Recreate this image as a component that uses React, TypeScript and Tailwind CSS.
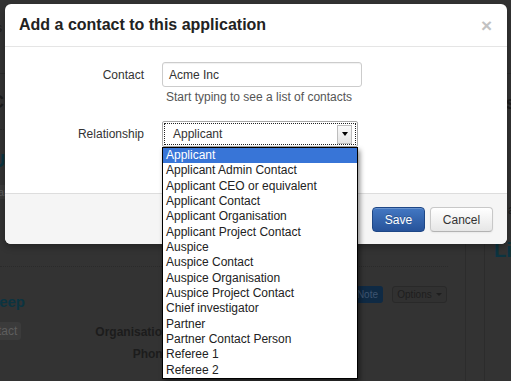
import React from "react";

const RELATIONSHIPS = [
  "Applicant",
  "Applicant Admin Contact",
  "Applicant CEO or equivalent",
  "Applicant Contact",
  "Applicant Organisation",
  "Applicant Project Contact",
  "Auspice",
  "Auspice Contact",
  "Auspice Organisation",
  "Auspice Project Contact",
  "Chief investigator",
  "Partner",
  "Partner Contact Person",
  "Referee 1",
  "Referee 2",
];

// the page behind the backdrop, dimmed almost to nothing
function PageBehind() {
  return (
    <div className="h-full flex flex-col text-[#1c1c1c]">
      <div className="h-[74px] shrink-0 border-b border-[#2b2b2b] pt-[21px]">
        <span className="block -ml-[4px] text-[12px] leading-[15px]">s</span>
      </div>

      <div className="flex flex-1">
        {/* main column */}
        <div className="w-[466px] shrink-0 border-r border-[#2c2c2c] flex flex-col items-start">
          <div className="-ml-[9px] mt-[17px] text-[18px] font-bold leading-[22px]">C</div>
          <div className="mt-[16px] w-[60px] border-t border-dotted border-[#2a2a2a]" />
          <div className="-ml-[8px] mt-[20px] text-[18px] font-bold leading-[22px] text-[#0b3441]">U</div>
          <div className="-ml-[6px] mt-[13px] h-[14px] px-[4px] rounded-[3px] bg-[#3a3a3a] text-[11px] leading-[14px] text-[#5c5c5c]">ar</div>
          <div className="mt-[67px] w-[448px] border-t border-dotted border-[#2a2a2a]" />

          <div className="flex">
            <div className="w-[340px] flex flex-col items-start">
              <div className="-ml-[20px] mt-[26px] text-[15px] font-bold leading-[18px] text-[#0b3441]">Sheep</div>
              <div className="flex items-start mt-[11px]">
                <span className="-ml-[28px] h-[18px] px-[4px] rounded-[3px] bg-[#3b3b3b] text-[12px] leading-[18px] text-[#5e5e5e]">Contact</span>
                <div className="w-[148px] flex flex-col items-end gap-[7px] pt-[3px] text-[12px] font-bold leading-[15px]">
                  <span>Organisation</span>
                  <span>Phone</span>
                </div>
              </div>
            </div>
            <div className="flex gap-[9px] mt-[19px] text-[10px]">
              <span className="w-[43px] h-[17px] rounded-[3px] bg-[#0f2a44] flex items-center justify-end pr-[5px] text-[#3e5470]">Note</span>
              <span className="w-[55px] h-[17px] rounded-[3px] border border-[#292929] bg-[#313131] flex items-center justify-center gap-[4px] text-[#1e1e1e]">
                Options
                <span className="border-x-[3px] border-t-[3px] border-x-transparent border-t-[#1e1e1e]" />
              </span>
            </div>
          </div>
        </div>

        <div className="w-[19px] shrink-0 border-r border-[#2c2c2c]" />

        {/* sidebar */}
        <div className="flex-1 flex flex-col items-end">
          <span className="-mr-[4px] mt-[18px] text-[18px] font-bold leading-[22px]">s</span>
          <span className="-mr-[3px] mt-[89px] text-[12px] leading-[15px]">a</span>
          <span className="self-start ml-[9px] mt-[20px] text-[20px] font-bold leading-[24px] text-[#0b3441]">Li</span>
        </div>
      </div>
    </div>
  );
}

function RelationshipSelect() {
  return (
    <div className="relative w-[196px] h-[26px]">
      <div className="h-full border border-[#a8a8a8] rounded-[2px] bg-white p-[1px]">
        <div className="h-full flex items-center border border-dotted border-[#222] pl-[8px] pr-[3px]">
          <span className="flex-1 text-[12px] text-[#333]">Applicant</span>
          <span className="w-[15px] h-[19px] border border-[#bdbdbd] bg-gradient-to-b from-[#fafafa] to-[#e4e4e4] flex items-center justify-center">
            <span className="border-x-[3.5px] border-t-[4px] border-x-transparent border-t-black" />
          </span>
        </div>
      </div>

      {/* open option list */}
      <ul className="absolute left-0 top-full w-[196px] bg-white border border-black shadow-[2px_3px_5px_rgba(0,0,0,0.45)] z-10">
        {RELATIONSHIPS.map((r, i) => (
          <li
            key={r}
            className={`h-[15.35px] leading-[15.35px] pl-[3px] text-[12px] whitespace-nowrap ${
              i === 0 ? "bg-[#3875d7] text-white" : "text-[#222]"
            }`}
          >
            {r}
          </li>
        ))}
      </ul>
    </div>
  );
}

export default function App() {
  return (
    <div className="relative w-[511px] h-[381px] overflow-hidden bg-[#333] font-['Liberation_Sans',Arial,sans-serif]">
      <PageBehind />

      {/* Modal */}
      <div className="absolute left-[5px] top-[4px] w-[502px] h-[240px] rounded-[6px] bg-white shadow-[0_3px_7px_rgba(0,0,0,0.3)] flex flex-col">
        <div className="h-[43px] shrink-0 border-b border-[#e5e5e5] flex items-center justify-between pl-[14px] pr-[15px]">
          <h3 className="text-[16px] font-bold text-[#222]">Add a contact to this application</h3>
          <span className="text-[19px] font-bold leading-none text-[#c2c2c2]">×</span>
        </div>

        <div className="flex-1 pt-[15px]">
          <div className="grid grid-cols-[139px_1fr] gap-x-[18px] items-center">
            <label className="text-right text-[12px] text-[#333]">Contact</label>
            <div className="w-[200px] h-[25px] border border-[#ccc] rounded-[3px] flex items-center px-[6px] text-[12px] text-[#333] shadow-[inset_0_1px_1px_rgba(0,0,0,0.06)]">
              Acme Inc
            </div>
            <div />
            <p className="mt-[3px] pl-[4px] text-[12px] leading-[15px] text-[#555]">Start typing to see a list of contacts</p>
          </div>

          <div className="mt-[16px] grid grid-cols-[139px_1fr] gap-x-[18px] items-center">
            <label className="text-right text-[12px] text-[#333]">Relationship</label>
            <RelationshipSelect />
          </div>
        </div>

        <div className="h-[51px] shrink-0 rounded-b-[6px] border-t border-[#ddd] bg-[#f5f5f5] flex items-center justify-end gap-[5px] pr-[14px] pt-[1px]">
          <button className="w-[53px] h-[25px] rounded-[4px] border border-[#1e4786] bg-gradient-to-b from-[#4378c3] to-[#27539a] text-[12px] text-white [text-shadow:0_-1px_0_rgba(0,0,0,0.25)] shadow-[inset_0_1px_0_rgba(255,255,255,0.2)]">
            Save
          </button>
          <button className="w-[63px] h-[25px] rounded-[4px] border border-[#c8c8c8] border-b-[#b3b3b3] bg-gradient-to-b from-white to-[#e6e6e6] text-[12px] text-[#333] shadow-[inset_0_1px_0_rgba(255,255,255,0.2),0_1px_2px_rgba(0,0,0,0.05)]">
            Cancel
          </button>
        </div>
      </div>
    </div>
  );
}
